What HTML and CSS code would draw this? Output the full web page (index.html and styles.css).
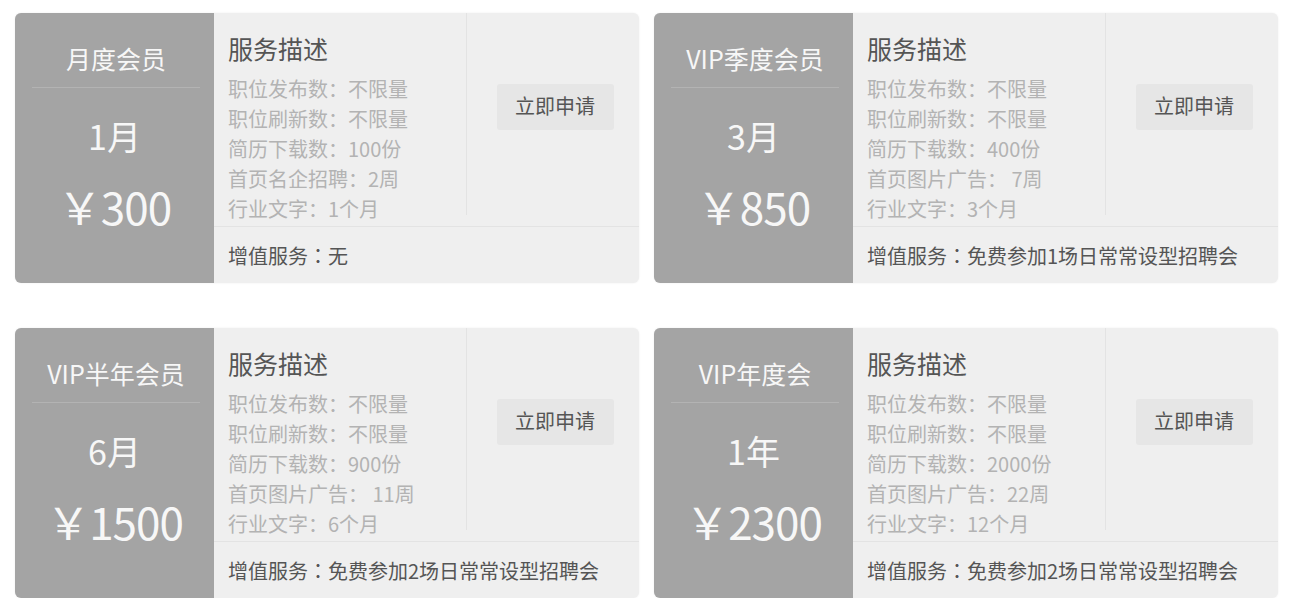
FILE: index.html
```html
<!DOCTYPE html>
<html lang="zh-CN">
<head>
<meta charset="utf-8">
<title>会员套餐</title>
<link rel="stylesheet" href="styles.css">
</head>
<body>
<div class="grid">
  <div class="card">
    <div class="side">
      <div class="side-title">月度会员</div>
      <div class="side-term">1月</div>
      <div class="side-price">￥300</div>
    </div>
    <div class="main">
      <div class="top">
        <div class="info">
          <div class="info-title">服务描述</div>
          <ul class="list">
            <li>职位发布数<span class="colon">：</span>不限量</li>
            <li>职位刷新数<span class="colon">：</span>不限量</li>
            <li>简历下载数<span class="colon">：</span>100份</li>
            <li>首页名企招聘<span class="colon">：</span>2周</li>
            <li>行业文字<span class="colon">：</span>1个月</li>
          </ul>
        </div>
        <div class="action"><a class="btn">立即申请</a></div>
      </div>
      <div class="extra">增值服务<span class="colon">：</span>无</div>
    </div>
  </div>

  <div class="card">
    <div class="side">
      <div class="side-title">VIP季度会员</div>
      <div class="side-term">3月</div>
      <div class="side-price">￥850</div>
    </div>
    <div class="main">
      <div class="top">
        <div class="info">
          <div class="info-title">服务描述</div>
          <ul class="list">
            <li>职位发布数<span class="colon">：</span>不限量</li>
            <li>职位刷新数<span class="colon">：</span>不限量</li>
            <li>简历下载数<span class="colon">：</span>400份</li>
            <li>首页图片广告<span class="colon">：</span> 7周</li>
            <li>行业文字<span class="colon">：</span>3个月</li>
          </ul>
        </div>
        <div class="action"><a class="btn">立即申请</a></div>
      </div>
      <div class="extra">增值服务<span class="colon">：</span>免费参加1场日常常设型招聘会</div>
    </div>
  </div>

  <div class="card">
    <div class="side">
      <div class="side-title">VIP半年会员</div>
      <div class="side-term">6月</div>
      <div class="side-price">￥1500</div>
    </div>
    <div class="main">
      <div class="top">
        <div class="info">
          <div class="info-title">服务描述</div>
          <ul class="list">
            <li>职位发布数<span class="colon">：</span>不限量</li>
            <li>职位刷新数<span class="colon">：</span>不限量</li>
            <li>简历下载数<span class="colon">：</span>900份</li>
            <li>首页图片广告<span class="colon">：</span> 11周</li>
            <li>行业文字<span class="colon">：</span>6个月</li>
          </ul>
        </div>
        <div class="action"><a class="btn">立即申请</a></div>
      </div>
      <div class="extra">增值服务<span class="colon">：</span>免费参加2场日常常设型招聘会</div>
    </div>
  </div>

  <div class="card">
    <div class="side">
      <div class="side-title">VIP年度会</div>
      <div class="side-term">1年</div>
      <div class="side-price">￥2300</div>
    </div>
    <div class="main">
      <div class="top">
        <div class="info">
          <div class="info-title">服务描述</div>
          <ul class="list">
            <li>职位发布数<span class="colon">：</span>不限量</li>
            <li>职位刷新数<span class="colon">：</span>不限量</li>
            <li>简历下载数<span class="colon">：</span>2000份</li>
            <li>首页图片广告<span class="colon">：</span>22周</li>
            <li>行业文字<span class="colon">：</span>12个月</li>
          </ul>
        </div>
        <div class="action"><a class="btn">立即申请</a></div>
      </div>
      <div class="extra">增值服务<span class="colon">：</span>免费参加2场日常常设型招聘会</div>
    </div>
  </div>
</div>
</body>
</html>
```

FILE: styles.css
```css
* { box-sizing: border-box; }

html, body {
  margin: 0;
  background: #ffffff;
}

body {
  padding: 13px 14px 0 15px;
  font-family: "Microsoft YaHei", "Noto Sans CJK SC", "Noto Sans", sans-serif;
}

.grid {
  display: grid;
  grid-template-columns: 624px 624px;
  column-gap: 15px;
  row-gap: 45px;
}

.card {
  display: flex;
  height: 270px;
  background: #efefef;
  border-radius: 6px;
  overflow: hidden;
  box-shadow: 0 0 2px rgba(0, 0, 0, 0.08);
}

.side {
  width: 199px;
  flex: none;
  background: #a4a4a4;
  color: #f7f7f7;
  display: flex;
  flex-direction: column;
  align-items: stretch;
  text-align: center;
}

.side-title {
  margin: 0 14px 0 17px;
  padding: 26px 0 10px;
  font-size: 25px;
  line-height: 38px;
  letter-spacing: 0;
  white-space: nowrap;
  border-bottom: 1px solid #b3b3b3;
}

.side-term {
  margin-top: 28px;
  font-size: 34px;
  line-height: 40px;
}

.side-price {
  margin-top: 24px;
  font-size: 44px;
  line-height: 52px;
  letter-spacing: -1px;
}

.main {
  flex: 1;
  display: flex;
  flex-direction: column;
}

.top {
  height: 214px;
  display: flex;
  align-items: flex-start;
  border-bottom: 1px solid #e3e3e3;
}

.info {
  width: 253px;
  height: 202px;
  padding: 18px 0 0 14px;
  border-right: 1px solid #e3e3e3;
}

.info-title {
  font-size: 25px;
  line-height: 34px;
  color: #555555;
  margin-bottom: 9px;
}

.list {
  list-style: none;
  margin: 0;
  padding: 0;
  font-size: 20px;
  line-height: 30px;
  color: #b3b3b3;
  white-space: nowrap;
}

.colon {
  font-family: "Noto Sans CJK JP", "Noto Sans CJK SC", sans-serif;
}

.action {
  flex: 1;
  display: flex;
  justify-content: center;
  padding-top: 71px;
}

.btn {
  display: block;
  width: 117px;
  height: 46px;
  margin-left: 4px;
  background: #e6e6e6;
  border-radius: 3px;
  color: #555555;
  font-size: 20px;
  line-height: 44px;
  text-align: center;
}

.extra {
  flex: 1;
  display: flex;
  align-items: center;
  padding-left: 14px;
  font-size: 20px;
  color: #555555;
  white-space: nowrap;
}
```
